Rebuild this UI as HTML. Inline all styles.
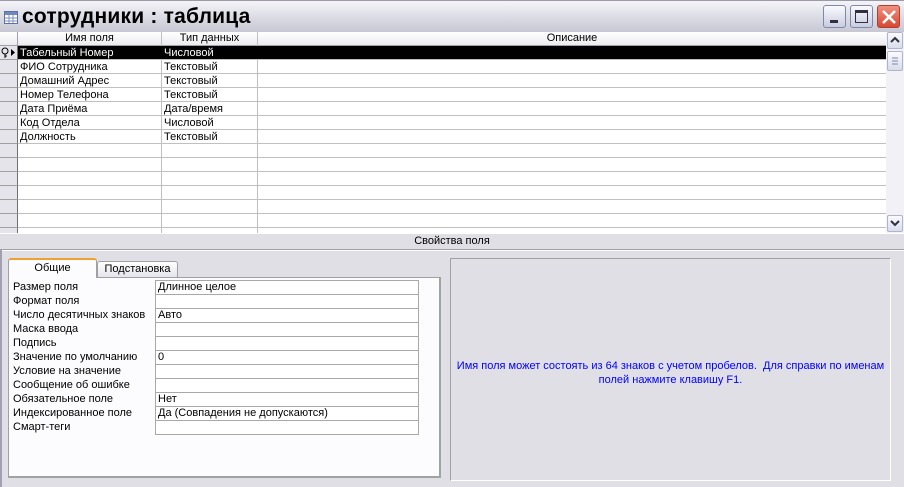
<!DOCTYPE html>
<html><head><meta charset="utf-8"><style>
*{margin:0;padding:0;box-sizing:border-box}
body{width:904px;height:487px;overflow:hidden;background:#dfdfe5;font-family:Tahoma,"Liberation Sans","DejaVu Sans",sans-serif;font-size:11px;color:#000;position:relative}
.a{position:absolute}
#title{left:0;top:0;width:904px;height:32px;background:linear-gradient(#f4f4f8,#d8d8e2 60%,#c8c8d4);border-top:1px solid #9a9aa8}
#title .t{left:22px;top:4px;font-size:21px;font-weight:bold;font-family:"Liberation Sans",sans-serif;letter-spacing:0.2px}
.btn{top:4px;width:23px;height:23px;border:1px solid #8088a8;border-radius:3px;background:linear-gradient(#fafaff,#c8cce0)}
#grid{left:0;top:32px;width:886px;height:201px;background:#fff;overflow:hidden}
.hdr{top:0;height:14px;background:linear-gradient(#fff,#ececf0);border-bottom:1px solid #a0a0a8;border-right:1px solid #a0a0a8;text-align:center;line-height:13px}
.row{left:0;width:886px;height:14px;border-bottom:1px solid #c0c0c0}
.sel{left:0;width:18px;height:14px;background:#e4e4ea;border-right:1px solid #707070;border-bottom:1px solid #a0a0a0}
.c{line-height:13px;white-space:nowrap}
.vl{top:0;width:1px;height:201px;background:#c0c0c0}
#sb{left:886px;top:32px;width:18px;height:201px;background:#f2f2f6}
.sbb{left:1px;width:16px;height:17px;border:1px solid #b0b4c8;border-radius:2px;background:linear-gradient(#fafaff,#d8dcec)}
#panel{left:8px;top:277px;width:433px;height:201px;background:#fcfcfe;border:1px solid #a0a0a0;border-right:2px solid #a0a4a0;border-bottom:2px solid #a0a4a0}
.pl{left:13px;line-height:13px}
.pv{left:155px;width:264px;height:15px;border:1px solid #a8a8a8;background:#fff;padding-left:2px;line-height:13px}
#help{left:450px;top:258px;width:441px;height:223px;border-left:1px solid #a0a0a0;border-top:1px solid #a0a0a0;border-right:1px solid #fff;border-bottom:1px solid #fff;color:#0000ff;text-align:center;line-height:14px}
</style></head><body>
<div id="title" class="a">
 <svg class="a" style="left:4px;top:10px" width="14" height="13"><rect x="0.5" y="0.5" width="13" height="12" fill="#fff" stroke="#6070a0"/><rect x="1" y="1" width="12" height="3" fill="#7088c0"/><path d="M1 7h12M1 10h12M5 4v8M9 4v8" stroke="#8090b8"/></svg>
 <div class="a t">сотрудники : таблица</div>
 <div class="a btn" style="left:823px"><div class="a" style="left:6px;top:14px;width:8px;height:3px;background:#303040"></div></div>
 <div class="a btn" style="left:850px"><div class="a" style="left:4px;top:4px;width:13px;height:13px;border:1px solid #303040;border-top:3px solid #303040"></div></div>
 <div class="a btn" style="left:877px;background:linear-gradient(#f09080,#d84830);border-color:#b04030"><svg class="a" style="left:3px;top:3px" width="16" height="16"><path d="M2 2L14 14M14 2L2 14" stroke="#fff" stroke-width="2.6"/></svg></div>
</div>
<div id="grid" class="a">
 <div class="a hdr" style="left:0;width:18px"></div>
 <div class="a hdr" style="left:18px;width:144px">Имя поля</div>
 <div class="a hdr" style="left:162px;width:96px">Тип данных</div>
 <div class="a hdr" style="left:258px;width:628px;border-right:none">Описание</div>
 <div class="a vl" style="left:161px"></div><div class="a vl" style="left:257px"></div>
 <div class="a row" style="top:14px;background:#000;color:#fff;height:14px"></div>
 <div class="a row" style="top:28px"></div><div class="a row" style="top:42px"></div><div class="a row" style="top:56px"></div><div class="a row" style="top:70px"></div><div class="a row" style="top:84px"></div><div class="a row" style="top:98px"></div><div class="a row" style="top:112px"></div><div class="a row" style="top:126px"></div><div class="a row" style="top:140px"></div><div class="a row" style="top:154px"></div><div class="a row" style="top:168px"></div><div class="a row" style="top:182px"></div><div class="a row" style="top:196px"></div>
 <div class="a sel" style="top:14px"><svg width="17" height="13"><circle cx="5" cy="5" r="3" fill="none" stroke="#000"/><path d="M5 8v4M5 10h2" stroke="#000"/><path d="M11 3l4 3.5L11 10z" fill="#000"/></svg></div>
 <div class="a sel" style="top:28px"></div><div class="a sel" style="top:42px"></div><div class="a sel" style="top:56px"></div><div class="a sel" style="top:70px"></div><div class="a sel" style="top:84px"></div><div class="a sel" style="top:98px"></div><div class="a sel" style="top:112px"></div><div class="a sel" style="top:126px"></div><div class="a sel" style="top:140px"></div><div class="a sel" style="top:154px"></div><div class="a sel" style="top:168px"></div><div class="a sel" style="top:182px"></div><div class="a sel" style="top:196px"></div>
 <div class="a c" style="left:20px;top:15px;color:#fff">Табельный Номер</div><div class="a c" style="left:164px;top:15px;color:#fff">Числовой</div>
 <div class="a c" style="left:20px;top:29px">ФИО Сотрудника</div><div class="a c" style="left:164px;top:29px">Текстовый</div>
 <div class="a c" style="left:20px;top:43px">Домашний Адрес</div><div class="a c" style="left:164px;top:43px">Текстовый</div>
 <div class="a c" style="left:20px;top:57px">Номер Телефона</div><div class="a c" style="left:164px;top:57px">Текстовый</div>
 <div class="a c" style="left:20px;top:71px">Дата Приёма</div><div class="a c" style="left:164px;top:71px">Дата/время</div>
 <div class="a c" style="left:20px;top:85px">Код Отдела</div><div class="a c" style="left:164px;top:85px">Числовой</div>
 <div class="a c" style="left:20px;top:99px">Должность</div><div class="a c" style="left:164px;top:99px">Текстовый</div>
</div>
<div id="sb" class="a">
 <div class="a sbb" style="top:0"><svg width="14" height="15"><path d="M3 9l4-4 4 4" fill="none" stroke="#303040" stroke-width="2"/></svg></div>
 <div class="a sbb" style="top:19px;height:20px"><svg width="14" height="18"><path d="M4 6h6M4 9h6M4 12h6" stroke="#8088a8"/></svg></div>
 <div class="a sbb" style="top:183px"><svg width="14" height="15"><path d="M3 5l4 4 4-4" fill="none" stroke="#303040" stroke-width="2"/></svg></div>
</div>
<div class="a" style="left:0;top:233px;width:904px;height:1px;background:#fff"></div>
<div class="a" style="left:0;top:235px;width:904px;text-align:center">Свойства поля</div>
<div class="a" style="left:0;top:249px;width:904px;height:1px;background:#a0a0a8"></div>
<div class="a" style="left:0;top:250px;width:904px;height:1px;background:#fff"></div>
<div class="a" style="left:0;top:250px;width:2px;height:237px;background:#a0a0b0"></div>
<div id="panel" class="a">
 <div class="a pl" style="left:4px;top:3px">Размер поля</div><div class="a pl" style="left:4px;top:17px">Формат поля</div><div class="a pl" style="left:4px;top:31px">Число десятичных знаков</div><div class="a pl" style="left:4px;top:45px">Маска ввода</div><div class="a pl" style="left:4px;top:59px">Подпись</div><div class="a pl" style="left:4px;top:73px">Значение по умолчанию</div><div class="a pl" style="left:4px;top:87px">Условие на значение</div><div class="a pl" style="left:4px;top:101px">Сообщение об ошибке</div><div class="a pl" style="left:4px;top:115px">Обязательное поле</div><div class="a pl" style="left:4px;top:129px">Индексированное поле</div><div class="a pl" style="left:4px;top:143px">Смарт-теги</div>
 <div class="a pv" style="left:146px;top:2px">Длинное целое</div><div class="a pv" style="left:146px;top:16px"></div><div class="a pv" style="left:146px;top:30px">Авто</div><div class="a pv" style="left:146px;top:44px"></div><div class="a pv" style="left:146px;top:58px"></div><div class="a pv" style="left:146px;top:72px">0</div><div class="a pv" style="left:146px;top:86px"></div><div class="a pv" style="left:146px;top:100px"></div><div class="a pv" style="left:146px;top:114px">Нет</div><div class="a pv" style="left:146px;top:128px">Да (Совпадения не допускаются)</div><div class="a pv" style="left:146px;top:142px"></div>
</div>
<div class="a" style="left:8px;top:258px;width:89px;height:20px;background:#fcfcfe;border:1px solid #a0a0a0;border-top:2px solid #f0a030;border-bottom:none;text-align:center;line-height:17px;border-radius:3px 3px 0 0">Общие</div>
<div class="a" style="left:97px;top:261px;width:81px;height:16px;background:linear-gradient(#fff,#e4e4ec);border:1px solid #a0a0a0;border-bottom:none;text-align:center;line-height:15px;border-radius:3px 3px 0 0">Подстановка</div>
<div id="help" class="a"><div class="a" style="left:0;top:100px;width:439px">Имя поля может состоять из 64 знаков с учетом пробелов.&nbsp; Для справки по именам<br>полей нажмите клавишу F1.</div></div>
</body></html>
